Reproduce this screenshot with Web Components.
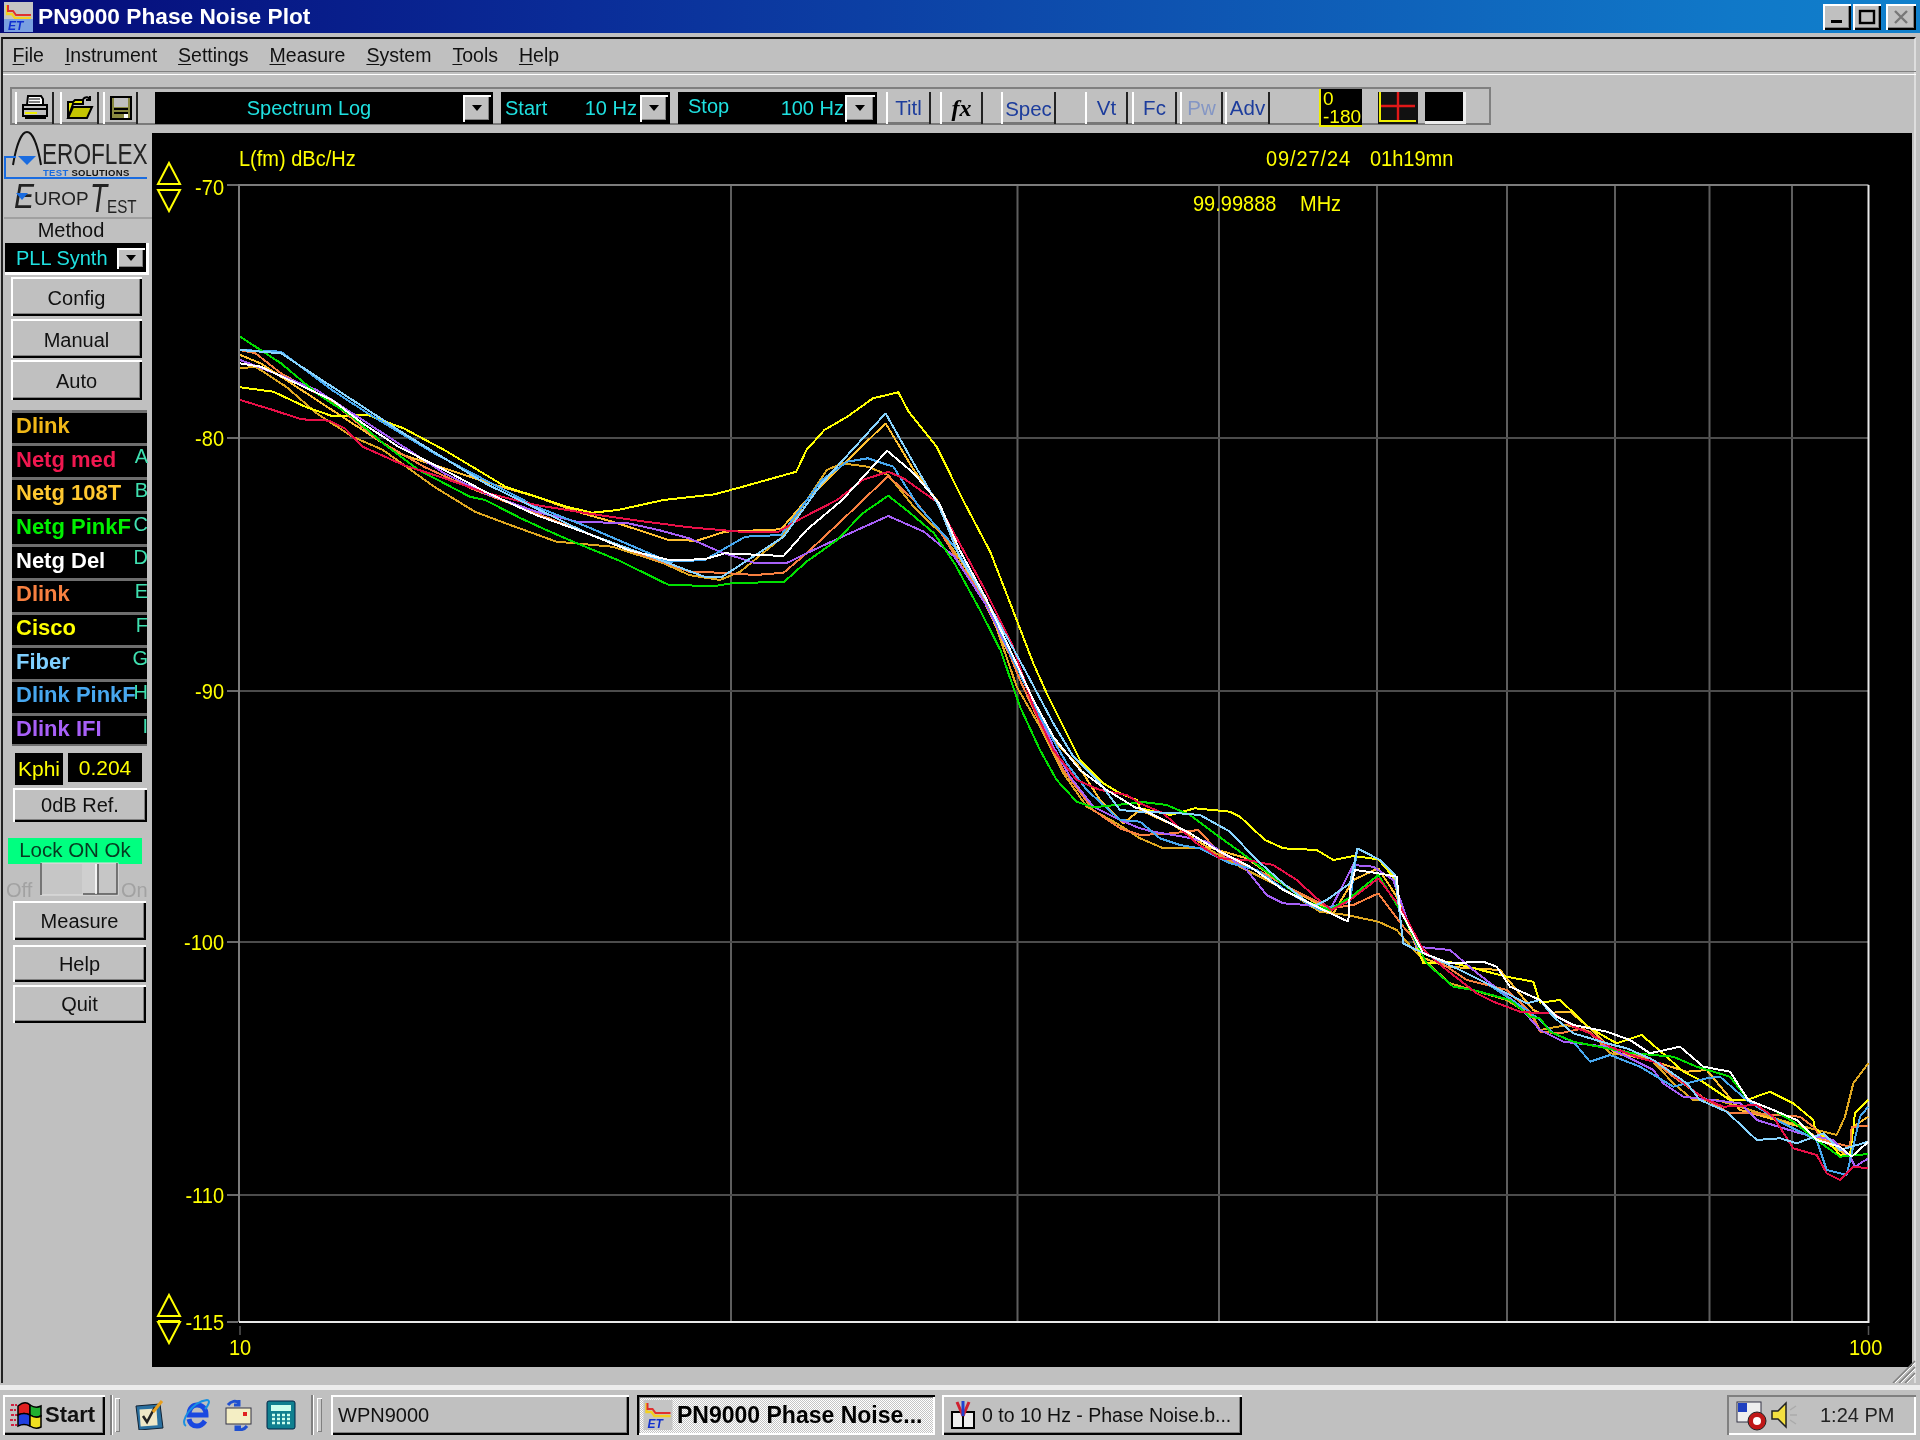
<!DOCTYPE html>
<html lang="en"><head><meta charset="utf-8"><title>PN9000 Phase Noise Plot</title>
<style>
html,body{margin:0;padding:0;background:#c0c0c0}
body{width:1920px;height:1440px;overflow:hidden;font-family:"Liberation Sans",Arial,sans-serif;font-size:20px;color:#111}
pn-desktop{filter:blur(.45px)}
</style></head><body>
<pn-desktop></pn-desktop>
<script>
function def(name,html,init){customElements.define(name,class extends HTMLElement{
  constructor(){super();this.attachShadow({mode:'open'}).innerHTML=html}
  connectedCallback(){if(init)init(this,this.shadowRoot)}
})}
const BEVEL='background:#c0c0c0;box-shadow:inset 2px 2px 0 #fff,inset -2px -2px 0 #000,inset -3px -3px 0 #808080;';
const TRI='<svg width="12" height="8" viewBox="0 0 12 8"><path d="M1 1h10L6 7z" fill="#000"/></svg>';

/* ---------- generic pieces ---------- */
def('bevel-button',`<style>:host{display:flex;align-items:center;justify-content:center;box-sizing:border-box;${BEVEL}font-size:20px;color:#111}</style><slot></slot>`);
def('drop-button',`<style>:host{display:flex;align-items:center;justify-content:center;box-sizing:border-box;flex:none;${BEVEL}}</style>${TRI}`);
def('tool-button',`<style>:host{display:flex;align-items:center;justify-content:center;box-sizing:border-box;height:32px;flex:none;background:#c0c0c0;box-shadow:inset 2px 0 0 #fff,inset -2px 0 0 #222,inset 0 -2px 0 #777;font-size:20.5px;color:#1c3c9c}</style><slot></slot>`);
def('win-control',`<style>:host{display:flex;box-sizing:border-box;width:28px;height:26px;${BEVEL}align-items:center;justify-content:center}</style><slot></slot>`);

/* ---------- title bar ---------- */
const APP=`<rect width="29" height="30" fill="#c4c4c4"/><path d="M3 3v9h5l3 4h16" fill="none" stroke="#f4d020" stroke-width="2.4"/><path d="M4 3v6h5l3 4h15" fill="none" stroke="#e03030" stroke-width="2"/>`;
def('title-bar',`<style>
:host{display:flex;align-items:center;height:33px;padding:0 4px;box-sizing:border-box;background:linear-gradient(90deg,#050a78 0,#0a2c98 30%,#0e52b0 60%,#1078c8 90%,#1080cc 100%);color:#fff}
svg.app{flex:none}
.t{margin-left:5px;font-weight:700;font-size:22.7px;line-height:33px;white-space:nowrap}
.c{margin-left:auto;display:flex;gap:2px;margin-right:0}
</style>
<svg class="app" width="29" height="30" viewBox="0 0 29 30">${APP}<rect y="17" width="29" height="13" fill="#7aa0e0"/><text x="4" y="28" font-family="Liberation Sans" font-weight="700" font-style="italic" font-size="12" fill="#1030d0">ET</text></svg>
<span class="t">PN9000 Phase Noise Plot</span>
<div class="c">
<win-control><svg width="16" height="14"><rect x="2" y="10" width="11" height="3" fill="#000"/></svg></win-control>
<win-control><svg width="18" height="16"><rect x="2" y="2" width="14" height="12" fill="none" stroke="#000" stroke-width="2.4"/></svg></win-control>
<win-control style="width:30px;margin-left:3px"><svg width="18" height="16"><path d="M3 2l12 12M15 2L3 14" stroke="#777" stroke-width="2.4"/></svg></win-control>
</div>`);

/* ---------- menu ---------- */
def('menu-bar',`<style>
:host{display:flex;height:32px;align-items:center;padding-left:9.5px;gap:21px;font-size:19.5px;color:#111}
u{text-underline-offset:2px}
</style>
<span><u>F</u>ile</span><span><u>I</u>nstrument</span><span><u>S</u>ettings</span><span><u>M</u>easure</span><span><u>S</u>ystem</span><span><u>T</u>ools</span><span><u>H</u>elp</span>`);

/* ---------- toolbar ---------- */
def('black-field',`<style>:host{display:flex;box-sizing:border-box;height:32px;flex:none;background:#000;color:#1fe0e0;font-size:20px;align-items:center}
::slotted(drop-button){width:28px;height:27px}</style><slot></slot>`);
def('tool-bar',`<style>
:host{display:block;box-sizing:border-box;height:58px;padding:12px 0 0 7px}
.p{box-sizing:border-box;width:1481px;height:38px;border:2px solid #808080;border-bottom-color:#7a7a7a;padding:3px 0 0 3px;display:flex;align-items:flex-start}
.ph{box-sizing:border-box;width:43px;height:38px;margin-top:-3px;background:#000;border-left:2px solid #ee0;border-bottom:2px solid #ee0;color:#ff0;font-size:19px;line-height:17px;display:flex;flex-direction:column;justify-content:space-between;margin-left:49px;padding:1px 0 0 2px;flex:none}
.cr{width:40px;height:32px;margin-left:16px;flex:none}
.bk{box-sizing:border-box;width:41px;height:32px;margin-left:7px;background:#000;border-right:3px solid #eee;border-bottom:3px solid #eee;flex:none}
</style>
<div class="p">
<tool-button style="width:39px"><svg width="30" height="28" viewBox="0 0 30 28"><path d="M8 2h13l2 3v6H7z" fill="#fff" stroke="#000" stroke-width="2"/><path d="M9 5h11M9 8h11" stroke="#000"/><path d="M3 11h24v11H3z" fill="#c0c0c0" stroke="#000" stroke-width="2"/><path d="M4 15h23M5 24h21" stroke="#000" stroke-width="2"/><rect x="5" y="18" width="12" height="2" fill="#ee0"/></svg></tool-button>
<tool-button style="width:39px;margin-left:6px"><svg width="30" height="26" viewBox="0 0 30 26"><path d="M3 23V7h5l2-2h8v4H8z" fill="#e8e800" stroke="#000" stroke-width="2"/><path d="M3 23l5-11h19l-5 11z" fill="#c4c400" stroke="#000" stroke-width="2"/><path d="M18 4c3-3 6-2 7 1M25 1v4h-4" fill="none" stroke="#000" stroke-width="2"/></svg></tool-button>
<tool-button style="width:35px;margin-left:4px"><svg width="24" height="26" viewBox="0 0 24 26"><path d="M2 2h20v22H2z" fill="#8a8a40" stroke="#000" stroke-width="2"/><rect x="5" y="3" width="14" height="9" fill="#c0c0c0"/><path d="M5 14h14M5 18h14" stroke="#000" stroke-width="2"/><rect x="15" y="19" width="4" height="4" fill="#fff"/></svg></tool-button>
<black-field style="width:338px;margin-left:17px;padding:0 2px 0 0"><span style="flex:1;text-align:center;font-size:20px">Spectrum Log</span><drop-button></drop-button></black-field>
<black-field style="width:169px;margin-left:8px;padding:0 2px 0 4px"><span>Start</span><span style="margin-left:auto;margin-right:3px">10 Hz</span><drop-button></drop-button></black-field>
<black-field style="width:199px;margin-left:8px;padding:0 2px 0 10px"><span style="margin-top:-3px">Stop</span><span style="margin-left:auto;margin-right:1px">100 Hz</span><drop-button style="width:30px"></drop-button></black-field>
<tool-button style="width:45px;margin-left:9px">Titl</tool-button>
<tool-button style="width:43px;margin-left:9px;color:#000;font-family:'Liberation Serif';font-style:italic;font-weight:700;font-size:24px">fx</tool-button>
<tool-button style="width:55px;margin-left:18px;padding-top:1px">Spec</tool-button>
<tool-button style="width:43px;margin-left:29px">Vt</tool-button>
<tool-button style="width:45px;margin-left:4px">Fc</tool-button>
<tool-button style="width:43px;margin-left:3px;color:#8496c4">Pw</tool-button>
<tool-button style="width:45px;margin-left:2px">Adv</tool-button>
<div class="ph"><span>0</span><span>-180</span></div>
<svg class="cr" viewBox="0 0 40 32"><rect width="40" height="32" fill="#111"/><path d="M2 0v29h36" fill="none" stroke="#ee0" stroke-width="2"/><path d="M3 14h34M20 0v28" stroke="#e01818" stroke-width="2.4"/></svg>
<div class="bk"></div>
</div>`);

/* ---------- side panel ---------- */
def('aeroflex-logo',`<style>
:host{display:block;position:relative;height:47px}
svg{position:absolute;left:0;top:-4px;overflow:visible}
.e{position:absolute;left:38px;top:8px;font-size:29px;line-height:26px;color:#222;transform:scaleX(.78);transform-origin:0 0;white-space:nowrap}
.s{position:absolute;left:39px;top:35px;font-size:9.5px;line-height:10px;font-weight:700;color:#111;letter-spacing:.3px;white-space:nowrap}
.s b{color:#1a6ce0}
</style>
<svg width="148" height="52" viewBox="0 0 148 52"><path d="M9 36C12 18 17 3 23 3s11 15 14 33" fill="none" stroke="#111" stroke-width="2"/><path d="M14 27h18l-9 9z" fill="#1a6ce0"/><path d="M12 28H1v21h142" fill="none" stroke="#1a6ce0" stroke-width="2"/></svg>
<span class="e">EROFLEX</span><span class="s"><b>TEST</b> SOLUTIONS</span>`);
def('europ-logo',`<style>
:host{display:block;position:relative;height:37px;border-bottom:2px solid #a0a0a0;box-sizing:content-box}
span{position:absolute;color:#222;white-space:nowrap}
.b{font-style:italic;line-height:30px}
.m{font-size:18px;line-height:18px;transform-origin:0 0}
svg{position:absolute;left:12px;top:13px}
</style>
<span class="b" style="left:10px;top:1px;font-size:30px;transform:scaleY(1.15)">E</span><svg width="12" height="8"><path d="M0 0h12L6 7z" fill="#1a6ce0"/></svg>
<span class="m" style="left:30px;top:10px;transform:scaleX(1.05)">UROP</span>
<span class="b" style="left:86px;top:4px;font-size:28px;transform:scaleY(1.45)">T</span>
<span class="m" style="left:103px;top:18px;font-size:19px;transform:scaleX(.8)">EST</span>`);
def('legend-row',`<style>
:host{display:flex;position:relative;align-items:center;box-sizing:border-box;height:33.7px;background:#000;border-top:3px solid #6e6e6e;padding:0 0 4px 4px;font-weight:700;font-size:22px;color:var(--c);white-space:nowrap}
.l{position:absolute;right:-1px;top:-1px;font-weight:400;font-size:20px;color:#3fe0b0}
</style><slot></slot><span class="l"></span>`,(el,s)=>{s.querySelector('.l').textContent=el.getAttribute('letter')||''});
def('side-panel',`<style>
:host{display:flex;flex-direction:column;width:148px;flex:none;color:#111}
.me{height:25px;line-height:25px;text-align:center;padding-right:14px;font-size:20px}
.co{box-sizing:border-box;width:144px;height:32px;margin-left:1px;background:#000;border-right:3px solid #fff;border-bottom:3px solid #fff;display:flex;align-items:center;color:#1fe0e0;font-size:20px;padding:1px 0 0 11px}
.co drop-button{width:28px;height:21px;margin-left:auto;margin-right:1px}
.btn{width:131px;margin-left:7px;padding-top:3px}
.b2{width:134px;margin-left:9px;padding-top:2px}
.le{width:135px;margin:9.5px 0 0 8px;border-bottom:2px solid #6e6e6e;box-sizing:content-box}
.k{display:flex;margin:6.5px 0 0 11px;color:#ff0;font-size:21px}
.k div{background:#000;height:32px;line-height:32px;text-align:center}
.lk{box-sizing:border-box;width:134px;height:26px;margin:16px 0 0 4px;background:#00ff80;color:#063a20;font-size:20.5px;line-height:24px;text-align:center}
.tg{position:relative;height:37px}
.tg svg{position:absolute;left:36px;top:-2px}
.tg span{position:absolute;top:15px;color:#a2a2a2;font-size:20px}
</style>
<aeroflex-logo></aeroflex-logo><europ-logo></europ-logo>
<div class="me" style="margin-top:-1px">Method</div>
<div class="co"><span>PLL Synth</span><drop-button></drop-button></div>
<bevel-button class="btn" style="height:39px;margin-top:2px">Config</bevel-button>
<bevel-button class="btn" style="height:39px;margin-top:3px">Manual</bevel-button>
<bevel-button class="btn" style="height:40px;margin-top:2px">Auto</bevel-button>
<div class="le">
<legend-row style="--c:#f0b818">Dlink</legend-row>
<legend-row style="--c:#f01850" letter="A">Netg med</legend-row>
<legend-row style="--c:#ffc830" letter="B">Netg 108T</legend-row>
<legend-row style="--c:#00f000" letter="C">Netg PinkF</legend-row>
<legend-row style="--c:#fff" letter="D">Netg Del</legend-row>
<legend-row style="--c:#f88040" letter="E">Dlink</legend-row>
<legend-row style="--c:#ffff00" letter="F">Cisco</legend-row>
<legend-row style="--c:#80d0ff" letter="G">Fiber</legend-row>
<legend-row style="--c:#48a8f0" letter="H">Dlink PinkF</legend-row>
<legend-row style="--c:#a860f8;height:31.7px;padding-bottom:2px" letter="I">Dlink IFI</legend-row>
</div>
<div class="k"><div style="width:48px">Kphi</div><div style="width:74px;margin-left:5px;height:29px;line-height:29px">0.204</div></div>
<bevel-button class="b2" style="height:34px;margin-top:3px">0dB Ref.</bevel-button>
<div class="lk">Lock ON Ok</div>
<div class="tg"><span style="left:2px">Off</span><span style="left:117px">On</span>
<svg width="80" height="35" viewBox="0 0 80 35"><rect x="1" y="1" width="77" height="32" fill="#c6c6c6" stroke="#e4e4e4"/><path d="M1 33V1" stroke="#555" stroke-width="1.5"/><rect x="42" y="2" width="16" height="30" fill="#cfcfcf"/><path d="M43 32h34V1M58 2v30" fill="none" stroke="#555" stroke-width="1.5"/><path d="M56 2v30" stroke="#fff" stroke-width="1.5"/></svg></div>
<bevel-button class="b2" style="height:39px;width:133px">Measure</bevel-button>
<bevel-button class="b2" style="height:37px;width:133px;margin-top:5px">Help</bevel-button>
<bevel-button class="b2" style="height:38px;width:133px;margin-top:3px">Quit</bevel-button>`);

/* ---------- plot ---------- */
const Z={a:(x,y)=>[230+x/1.96,330+y/3],b:(x,y)=>[800+x/3,560+y/3],c:(x,y)=>[1140+x/3,770+y/3],d:(x,y)=>[1540+x/3,1000+y/3]};
const R={a:[0,1010],b:[1010,1140],c:[1140,1540],d:[1540,1868.5]};
const T=[
{col:'#e0a820',a:[20,115,50,110,110,170,170,250,240,320,300,360,400,470,480,545,540,580,640,635,750,650,850,700,900,735,960,750,1000,725,1080,625,1170,420,1200,400,1250,410,1290,435,1340,530,1400,620,1440,710,1490,840,1530,960],b:[650,380,720,500,790,640,860,740,950,790,1020,840],c:[0,205,70,235,200,235,300,290,420,350,540,425,620,435,715,455,770,480,830,550,930,640,1100,690,1180,740,1240,770,1200,775],d:[0,90,80,75,150,95,210,160,330,175,400,250,460,300,530,300,600,320,720,360,830,390,890,405,915,350,940,250,985,190]},
{col:'#ffc030',a:[20,75,60,100,150,190,230,270,330,370,420,415,520,465,600,500,680,545,760,580,860,630,915,632,970,605,1080,598,1130,510,1285,280,1340,420,1390,520,1430,680,1480,820,1520,950],b:[670,360,760,540,830,610,900,720,970,790,1020,820],c:[0,120,100,165,200,230,320,265,440,350,530,400,580,430,640,330,715,295,770,380,840,560,920,590,1080,600,1180,720,1200,725],d:[0,40,90,35,150,85,220,155,360,190,440,215,500,210,600,330,780,380,860,430,930,470,940,380,985,350]},
{col:'#ffff00',a:[20,172,85,185,150,232,200,258,270,255,340,295,420,360,480,415,540,470,590,495,660,530,710,548,760,540,850,510,950,493,1010,468,1110,425,1130,360,1165,300,1210,260,1260,205,1310,187,1330,245,1385,350,1440,520,1490,665,1530,810],b:[650,180,700,310,740,400,790,500,840,600,910,670,960,700,1010,720],c:[0,115,90,135,165,115,270,125,300,140,375,210,430,235,530,240,580,270,640,258,715,268,760,320,780,400,850,580,925,575,1100,620,1180,635,1200,650],d:[0,8,60,0,150,85,230,130,305,105,380,170,430,215,480,240,570,300,620,300,690,275,760,310,820,360,825,385,860,420,900,465,930,465,945,340,985,300]},
{col:'#f88040',a:[20,60,50,70,100,130,200,215,290,330,380,410,480,480,600,550,700,610,800,670,900,725,960,728,1030,735,1085,728,1130,670,1200,570,1290,438,1340,510,1390,600,1430,700,1490,830,1530,960],b:[660,360,720,490,790,630,880,750,960,805,1020,825],c:[0,195,100,190,175,180,250,260,370,310,480,370,570,415,640,405,715,370,790,470,860,550,980,630,1100,660,1170,725,1200,760],d:[0,95,60,100,130,85,200,140,330,175,400,230,500,300,570,340,640,340,780,350,820,380,850,420,930,440,935,380,985,378]},
{col:'#a860f8',a:[20,90,80,125,170,180,240,250,340,350,420,430,500,490,600,545,680,575,780,580,840,600,900,625,960,665,1030,700,1090,700,1130,670,1200,620,1290,558,1360,605,1420,680,1480,820,1530,960],b:[640,300,700,420,760,560,810,650,880,740,960,780,1020,815],c:[0,175,40,185,130,200,200,215,320,300,380,375,430,400,500,405,570,420,640,285,700,290,760,330,830,530,930,540,1000,600,1090,670,1130,700,1200,770],d:[0,90,70,125,200,140,340,210,370,250,430,290,600,310,650,360,780,400,880,420,930,470,945,500,985,475]},
{col:'#48a8f0',a:[20,60,100,65,200,180,270,250,400,370,500,450,600,530,700,590,860,695,930,690,1010,620,1080,615,1160,450,1210,395,1250,385,1300,410,1350,530,1420,650,1480,800,1530,950],b:[640,300,720,470,800,610,860,690,960,780,1020,810],c:[0,155,60,205,120,225,180,235,270,280,350,300,450,370,540,420,630,395,652,235,720,270,765,315,790,520,830,540,960,600,1040,640,1160,720,1200,770],d:[0,60,40,100,100,125,150,185,210,165,300,200,400,260,500,235,540,230,620,300,720,365,830,420,860,510,920,525,960,350,985,320]},
{col:'#00e000',a:[20,20,100,100,170,190,240,260,300,340,370,420,470,500,500,510,570,565,620,600,680,640,760,690,860,765,950,768,990,758,1085,757,1130,695,1190,630,1240,550,1290,497,1330,545,1380,610,1420,700,1470,840,1510,960],b:[660,440,720,570,770,660,830,725,880,742,1000,730,1020,730],c:[0,95,80,105,150,135,230,195,300,245,400,320,500,395,570,420,640,375,715,315,780,420,860,580,940,650,1000,660,1110,690,1170,740,1200,770],d:[0,55,30,95,100,125,200,145,280,160,400,170,470,200,570,230,625,300,700,330,760,365,830,420,900,470,985,462]},
{col:'#e81048',a:[20,210,80,238,140,268,195,272,225,295,260,350,340,405,420,445,500,488,600,525,700,550,800,572,900,592,1000,605,1075,605,1120,565,1190,510,1240,450,1290,425,1320,445,1385,515,1430,640,1480,780,1530,940],b:[640,262,700,440,760,570,830,660,900,690,980,705,1020,725],c:[0,100,70,130,170,220,240,265,320,270,400,285,470,330,530,385,575,420,630,390,715,325,780,410,850,540,920,600,1010,670,1060,695,1140,725,1200,730],d:[0,40,40,40,100,80,150,100,210,140,300,175,360,190,420,240,490,295,550,320,650,315,700,350,760,445,830,465,860,520,900,540,940,500,985,505]},
{col:'#88d4ff',a:[20,60,100,70,220,190,340,310,500,460,700,610,860,700,930,740,965,740,1085,620,1160,460,1285,250,1340,400,1390,530,1430,680,1490,830,1530,950],b:[680,340,760,490,820,590,900,670,960,750,1020,795],c:[0,125,120,130,180,135,270,185,350,270,430,340,520,410,560,390,630,340,652,235,720,270,765,315,790,520,830,540,960,600,1040,640,1160,700,1200,720],d:[0,0,40,50,100,100,200,130,260,145,340,180,440,250,480,300,560,335,650,420,720,415,770,430,850,400,900,450,985,425]},
{col:'#ffffff',a:[20,100,60,110,130,160,200,210,260,280,330,350,420,420,500,485,600,555,700,610,780,660,860,690,930,688,970,670,1085,678,1130,600,1200,510,1288,362,1340,430,1390,520,1430,660,1480,800,1530,950],b:[640,290,700,420,760,530,840,630,920,690,1010,745],c:[0,115,70,150,150,190,230,240,330,290,430,360,530,410,625,455,630,360,645,300,715,310,770,320,780,420,850,550,930,580,1030,575,1070,590,1110,650,1200,680],d:[0,0,50,50,100,75,200,95,270,120,330,160,420,140,490,200,570,215,625,300,700,330,770,360,830,420,900,440,935,470,985,425]}
];
function tracePts(t){const o=[];for(const k of 'abcd'){const a=t[k];for(let i=0;i<a.length;i+=2){const p=Z[k](a[i],a[i+1]);if(p[0]>=R[k][0]&&p[0]<R[k][1])o.push(p[0].toFixed(1)+','+p[1].toFixed(1))}}return o.join(' ')}
const L=240,TP=185,BT=1322,RT=1868.5;
const xs=[731,1017.5,1219,1377,1507,1615,1709.5,1792];
const ys=[[-70,185],[-80,438],[-90,691],[-100,942],[-110,1195],[-115,1322]];
let grid='';
xs.forEach(x=>grid+=`<path d="M${x} ${TP}V${BT}" stroke="#5e5e5e" stroke-width="2"/>`);
ys.slice(1,5).forEach(y=>grid+=`<path d="M${L} ${y[1]}H${RT}" stroke="#4c4c4c" stroke-width="2"/>`);
ys.forEach(y=>grid+=`<path d="M227 ${y[1]}h11" stroke="#6a6a6a" stroke-width="2"/>`);
grid+=`<path d="M${L} 1326v9M${RT} 1326v9" stroke="#555" stroke-width="1.5"/>`;
grid+=`<path d="M${L-1} ${BT}V${TP}H${RT}" fill="none" stroke="#7c7c7c" stroke-width="2"/><path d="M${L-1} ${BT}H${RT}V${TP}" fill="none" stroke="#e8e8e8" stroke-width="2"/>`;
const lines=T.map(t=>`<polyline points="${tracePts(t)}" fill="none" stroke="${t.col}" stroke-width="2" stroke-linejoin="bevel" shape-rendering="crispEdges"/>`).join('');
const tri=(y)=>`<path d="M169 ${y}l11 ${21}h-22zM158 ${y+27}h22l-11 ${21}z" fill="none" stroke="#ff0" stroke-width="2"/>`;
const lbl=(t,x,y,ex='')=>`<span style="left:${x-152}px;top:${y-133}px;${ex}">${t}</span>`;
const rlab=(t,y)=>`<span style="right:${1912-224}px;top:${y-133-12}px">${t}</span>`;
def('plot-panel',`<style>
:host{display:block;position:relative;flex:none;width:1760px;height:1234px;background:#000;color:#ff0;font-size:20px;line-height:24px;overflow:hidden}
svg{position:absolute;left:0;top:0}
span{position:absolute;white-space:nowrap;transform:scaleY(1.13)}
</style>
<svg width="1760" height="1234" viewBox="152 133 1760 1234">${grid}${lines}${tri(163)}${tri(1295)}<path d="M158 1321h22" stroke="#ff0" stroke-width="2"/></svg>
${lbl('L(fm) dBc/Hz',239,146)}${lbl('09/27/24',1266,146,'letter-spacing:.9px')}${lbl('01h19mn',1370,146)}${lbl('99.99888',1193,191)}${lbl('MHz',1300,191)}
${ys.map((y,i)=>rlab(y[0],y[1]+(i?0:2))).join('')}
${lbl('10',229,1335)}${lbl('100',1849,1335)}`);

/* ---------- taskbar ---------- */
def('task-button',`<style>
:host{display:flex;align-items:center;box-sizing:border-box;height:40px;flex:none;${BEVEL}padding-left:7px;font-size:20px;white-space:nowrap;color:#111}
:host([active]){background:repeating-conic-gradient(#fff 0 25%,#c4c4c4 0 50%) 0 0/2px 2px;box-shadow:inset 2px 2px 0 #000,inset -2px -2px 0 #fff,inset 3px 3px 0 #808080;font-weight:700;font-size:23px;color:#000}
</style><slot></slot>`);
def('task-bar',`<style>
:host{display:flex;box-sizing:border-box;height:50px;padding:5px 4px 5px 3px;align-items:flex-start}
.g{flex:none;box-sizing:border-box;width:2px;height:40px;background:#808080;box-shadow:1px 0 0 #fff}
.h{flex:none;box-sizing:border-box;width:5px;height:34px;margin-top:3px;background:#c8c8c8;box-shadow:inset 1px 1px 0 #fff,inset -1px -1px 0 #808080}
svg{flex:none}
.tr{flex:none;margin-left:auto;box-sizing:border-box;width:189px;height:40px;box-shadow:inset 2px 2px 0 #808080,inset -2px -2px 0 #fff;display:flex;align-items:center;padding-left:9px;font-size:20px;color:#222}
</style>
<task-button style="width:102px;padding-left:6px;font-weight:700;font-size:22px;color:#111"><svg width="34" height="30" viewBox="0 0 34 30" style="margin-right:2px"><path d="M2 5h6M1 10h6M2 15h6M1 20h6M2 25h6" stroke="#d02040" stroke-width="2" stroke-dasharray="3 1"/><path d="M9 6c6-5 10-3 12-1v10C17 13 13 13 9 15z" fill="#e02020" stroke="#000" stroke-width="1.5"/><path d="M21 5c3 2 7 3 11 1v10c-4 2-8 1-11-1z" fill="#20b030" stroke="#000" stroke-width="1.5"/><path d="M9 15c4-2 8-2 12 0v11c-4-2-8-2-12 0z" fill="#2040e0" stroke="#000" stroke-width="1.5"/><path d="M21 15c3 2 7 3 11 1v11c-4 2-8 1-11-1z" fill="#f0e020" stroke="#000" stroke-width="1.5"/></svg>Start</task-button>
<div class="g" style="margin-left:5px"></div><div class="h" style="margin-left:3px"></div>
<svg style="margin:5px 0 0 15px" width="30" height="30" viewBox="0 0 30 30"><path d="M1 6l24-2 3 24-24 2z" fill="#2a70a0" stroke="#123" /><rect x="5" y="9" width="17" height="17" fill="#eee8c8" transform="rotate(-4 13 17)"/><path d="M8 16l4 6 8-15" fill="none" stroke="#222" stroke-width="2.5"/><path d="M18 12L27 1" stroke="#e8a020" stroke-width="3"/></svg>
<svg style="margin:3px 0 0 15px" width="30" height="34" viewBox="0 0 30 34"><path d="M26 17H9c0-7 4-10 8-10 5 0 9 3 9 10zM9 21c1 5 4 7 8 7 4 0 6-2 8-5" fill="none" stroke="#1a48e0" stroke-width="5"/><path d="M6 28C-1 24 12 4 27 2c4 0 1 6-2 9" fill="none" stroke="#1890e0" stroke-width="2"/></svg>
<svg style="margin:4px 0 0 13px" width="30" height="32" viewBox="0 0 30 32"><rect x="3" y="9" width="25" height="16" fill="#f4eec4" stroke="#334"/><rect x="20" y="13" width="4" height="4" fill="#e02020"/><path d="M5 6c3-4 8-5 11-2M16 1v5h-5" fill="none" stroke="#2050d0" stroke-width="3"/><path d="M24 27c-3 4-8 5-11 2M13 33v-5h5" fill="none" stroke="#2050d0" stroke-width="3"/></svg>
<svg style="margin:5px 0 0 13px" width="30" height="30" viewBox="0 0 30 30"><rect x="1" y="1" width="28" height="28" rx="2" fill="#108090" stroke="#024"/><rect x="5" y="5" width="20" height="6" fill="#cfe"/><path d="M6 15h18M6 19h18M6 23h18" stroke="#cfe" stroke-width="2.5" stroke-dasharray="3 2"/></svg>
<div class="g" style="margin-left:15px"></div><div class="h" style="margin-left:4px"></div>
<task-button style="width:298px;margin-left:9px">WPN9000</task-button>
<task-button active style="width:298px;margin-left:8px;padding-left:6px"><svg width="30" height="30" viewBox="0 0 29 30" style="margin-right:4px">${APP}<text x="4" y="28" font-family="Liberation Sans" font-weight="700" font-style="italic" font-size="12" fill="#1030d0">ET</text></svg>PN9000 Phase Noise...</task-button>
<task-button style="width:300px;margin-left:7px;padding-left:6px;font-size:19.5px"><svg width="30" height="30" viewBox="0 0 30 30" style="margin-right:4px"><path d="M4 12h22v16H4z" fill="#eee" stroke="#000" stroke-width="2"/><path d="M15 12v16" stroke="#000" stroke-width="2"/><path d="M9 2l6 14M21 2l-6 14" stroke="#d02030" stroke-width="3"/><path d="M15 1v15" stroke="#2040d0" stroke-width="3"/></svg>0 to 10 Hz - Phase Noise.b...</task-button>
<div class="tr"><svg width="34" height="34" viewBox="0 0 34 34"><rect x="1" y="4" width="24" height="20" fill="#eee" stroke="#334"/><rect x="2" y="5" width="9" height="9" fill="#2040c0"/><circle cx="21" cy="23" r="9" fill="#c01818" stroke="#222"/><circle cx="21" cy="23" r="4" fill="#fff"/></svg><svg width="30" height="30" viewBox="0 0 30 30"><path d="M2 11h6l8-8v24l-8-8H2z" fill="#f4e040" stroke="#222" stroke-width="1.5"/><path d="M20 10l6-4M20 15h7M20 20l6 4" stroke="#aaa" stroke-width="1.5"/></svg><span style="margin-left:20px;white-space:nowrap">1:24 PM</span></div>`);

/* ---------- window ---------- */
def('pn-desktop',`<style>
:host{display:block;width:1920px;height:1440px;background:#c0c0c0;overflow:hidden}
.win{box-sizing:border-box;height:1346px;margin:4px 4px 0 1px;border-top:2px solid #111;border-left:2px solid #222;border-right:2px solid #ddd}
.sep{height:4px;box-sizing:border-box;border-top:1px solid #808080;border-bottom:1px solid #fff;margin-right:-2px}
.main{display:flex;margin-left:1px;height:1234px}
.gr{position:relative;height:16px}
.gr svg{position:absolute;right:-2px;bottom:0}
.edge{height:5px;background:#ececec;margin-top:2px}
</style>
<title-bar></title-bar>
<div class="win">
<menu-bar></menu-bar>
<div class="sep"></div>
<tool-bar></tool-bar>
<div class="main"><side-panel></side-panel><plot-panel></plot-panel></div>
<div class="gr"><svg width="26" height="24" viewBox="0 0 26 24"><path d="M25 2L3 24M25 8L9 24M25 14L15 24" stroke="#808080" stroke-width="1.5"/><path d="M25 4L5 24M25 10L11 24M25 16L17 24" stroke="#fff"/></svg></div>
</div>
<div class="edge"></div>
<task-bar></task-bar>`);
</script>
</body></html>
